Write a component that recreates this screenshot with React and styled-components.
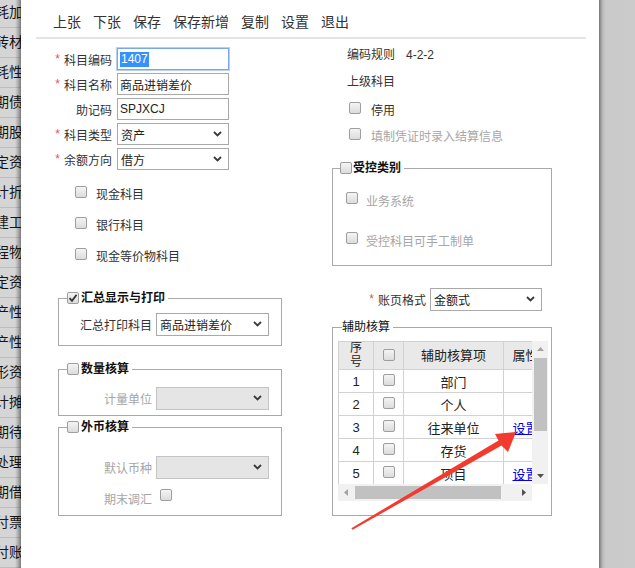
import React from "react";
import styled, { createGlobalStyle } from "styled-components";

const GlobalStyle = createGlobalStyle`
  html, body { margin: 0; padding: 0; }
  body {
    font-family: "Liberation Sans", "Noto Sans CJK SC", sans-serif;
    font-size: 12px;
    color: #333;
    background: #fff;
  }
  * { box-sizing: border-box; }
`;

const FONT = `"Liberation Sans", "Noto Sans CJK SC", sans-serif`;

const Page = styled.div`
  position: relative;
  display: flex;
  width: 635px;
  height: 568px;
  overflow: hidden;
  font-family: ${FONT};
`;

const Strip = styled.div`
  position: relative;
  flex: none;
  width: 21px;
  height: 568px;
  overflow: hidden;
  background: #d5d5d5;
  display: flex;
  flex-direction: column;
  &::after {
    content: "";
    position: absolute;
    top: 0;
    right: 0;
    bottom: 0;
    width: 6px;
    background: linear-gradient(to right, rgba(0,0,0,0), rgba(0,0,0,0.18) 50%, rgba(0,0,0,0.42));
  }
`;

const StripRow = styled.div`
  flex: none;
  height: 30px;
  line-height: 29px;
  border-bottom: 1px solid #bcbcbc;
  font-size: 14px;
  color: #151515;
  white-space: nowrap;
  text-indent: -5px;
  &:first-child { margin-top: -2px; }
`;

const Dialog = styled.div`
  flex: 1;
  background: #fff;
  display: flex;
  flex-direction: column;
`;

const Side = styled.div`
  flex: none;
  width: 36px;
  background: linear-gradient(to right, #777 0, #9c9c9c 2px, #bdbdbd 4px, #cacaca 7px, #cbcbcb);
`;

const Toolbar = styled.div`
  display: flex;
  gap: 12px;
  height: 39px;
  margin: 0 13px 0 15px;
  padding: 14px 0 0 17px;
  border-bottom: 2px solid #e4e4e4;
  font-size: 14px;
  line-height: 16px;
  color: #333;
`;

const ToolItem = styled.span`
  white-space: nowrap;
`;

const Body = styled.div`
  display: flex;
  padding: 9px 0 0 29px;
  gap: 51px;
`;

const LeftCol = styled.div`
  width: 231px;
  display: flex;
  flex-direction: column;
`;

const RightCol = styled.div`
  width: 221px;
  display: flex;
  flex-direction: column;
`;

const FormRow = styled.div`
  display: flex;
  align-items: center;
  height: 22px;
  margin-top: ${(p) => p.$mt || 0}px;
`;

const Label = styled.div`
  width: ${(p) => p.$w}px;
  flex: none;
  display: flex;
  justify-content: flex-end;
  align-items: center;
  margin-right: ${(p) => (p.$gap != null ? p.$gap : 5)}px;
  color: ${(p) => (p.$muted ? "#a6a6a6" : "#333")};
  font-size: 12px;
  white-space: nowrap;
`;

const Star = styled.span`
  color: #e8505b;
  margin-right: 4px;
  font-size: 12px;
`;

const Input = styled.div`
  width: 112px;
  height: 22px;
  flex: none;
  display: flex;
  align-items: center;
  padding-left: 2px;
  border: 1px solid ${(p) => (p.$focus ? "#7aa7e6" : "#a9a9a9")};
  box-shadow: ${(p) => (p.$focus ? "0 0 0 1px #b7d0f2" : "none")};
  font-size: 12px;
  color: #222;
  background: #fff;
`;

const Selected = styled.span`
  background: #3392fe;
  color: #fff;
  line-height: 15px;
  padding: 0 1px;
`;

const SelectBox = styled.div`
  width: ${(p) => p.$w}px;
  height: ${(p) => p.$h || 23}px;
  flex: none;
  display: flex;
  align-items: center;
  justify-content: space-between;
  padding: 0 6px 0 3px;
  border: 1px solid ${(p) => (p.$disabled ? "#c4c4c4" : "#a9a9a9")};
  background: ${(p) => (p.$disabled ? "#e5e5e5" : "#fff")};
  font-size: 12px;
  color: #222;
`;

const Chevron = () => (
  <svg width="9" height="6" viewBox="0 0 9 6">
    <polyline points="1,1 4.5,4.5 8,1" fill="none" stroke="#3a3a3a" strokeWidth="1.8" />
  </svg>
);

const Select = ({ w, h, disabled, children }) => (
  <SelectBox $w={w} $h={h} $disabled={disabled}>
    <span>{children}</span>
    <Chevron />
  </SelectBox>
);

const Box = styled.span`
  display: inline-flex;
  align-items: center;
  justify-content: center;
  flex: none;
  width: 12px;
  height: 12px;
  border: 1px solid #9e9e9e;
  border-radius: 2px;
  background: linear-gradient(#f4f4f4, #dcdcdc);
  margin-bottom: ${(p) => p.$lift || 0}px;
`;

const Check = ({ checked, lift }) => (
  <Box $lift={lift}>
    {checked && (
      <svg width="10" height="10" viewBox="0 0 10 10">
        <polyline points="1.5,5.2 4,7.8 8.6,1.8" fill="none" stroke="#333" strokeWidth="1.8" />
      </svg>
    )}
  </Box>
);

const CheckRow = styled.div`
  display: flex;
  align-items: center;
  height: 16px;
  margin-top: ${(p) => p.$mt || 0}px;
  margin-left: ${(p) => p.$ml || 0}px;
  gap: ${(p) => p.$gap || 9}px;
  color: ${(p) => (p.$muted ? "#a6a6a6" : "#333")};
  font-size: 12px;
  line-height: 16px;
  white-space: nowrap;
`;

const Group = styled.fieldset`
  margin: ${(p) => p.$mt || 0}px 0 0 ${(p) => p.$ml || 0}px;
  padding: 0;
  width: ${(p) => p.$w}px;
  min-width: 0;
  border: 1px solid #a9a9a9;
`;

const Legend = styled.legend`
  display: flex;
  align-items: center;
  gap: ${(p) => p.$gap || 1}px;
  height: 16px;
  margin-left: ${(p) => p.$ml}px;
  padding: 0 3px 0 0;
  font-size: 12px;
  line-height: 16px;
  font-weight: ${(p) => (p.$bold ? 700 : 400)};
  color: #111;
  white-space: nowrap;
`;

const GroupBody = styled.div`
  padding: ${(p) => p.$pad};
  display: flex;
  flex-direction: column;
`;

const InfoRow = styled.div`
  display: flex;
  height: 14px;
  line-height: 14px;
  margin-top: ${(p) => p.$mt || 0}px;
  padding-left: 15px;
  color: #333;
  font-size: 12px;
`;

const InfoValue = styled.span`
  margin-left: 11px;
`;

/* table */
const Grid = styled.div`
  display: grid;
  grid-template-columns: 194px 16px;
  grid-template-rows: 143px 17px;
  width: 210px;
`;

const Clip = styled.div`
  overflow: hidden;
  width: 194px;
  height: 143px;
`;

const Table = styled.table`
  border-collapse: collapse;
  table-layout: fixed;
  width: 209px;
  font-size: 13px;
  color: #222;
  th, td {
    border: 1px solid #d2d2d2;
    text-align: center;
    padding: 0;
    overflow: hidden;
    white-space: nowrap;
  }
  th {
    height: 28px;
    background: #e9e9e9;
    font-weight: 400;
    line-height: 13px;
  }
  td {
    height: 23px;
    background: #fff;
  }
`;

const StackHead = styled.div`
  display: flex;
  flex-direction: column;
  align-items: center;
  font-size: 12px;
  line-height: 13px;
  gap: 1px;
`;

const Num = styled.td`
  font-family: "Liberation Sans", sans-serif;
`;

const Link = styled.a`
  color: #0000ee;
  text-decoration: underline;
`;

const VScroll = styled.div`
  background: #f1f1f1;
  display: flex;
  flex-direction: column;
  align-items: center;
`;

const HScroll = styled.div`
  background: #f1f1f1;
  display: flex;
  align-items: center;
`;

const Btn = styled.div`
  flex: none;
  width: 16px;
  height: 16px;
  display: flex;
  align-items: center;
  justify-content: center;
`;

const VThumb = styled.div`
  width: 13px;
  height: 73px;
  margin-top: 1px;
  background: #c1c1c1;
`;

const HThumb = styled.div`
  width: 146px;
  height: 13px;
  margin-left: 1px;
  background: #c1c1c1;
`;

const Spacer = styled.div`
  flex: 1;
`;

const Corner = styled.div`
  background: #fff;
`;

const Tri = ({ dir, color }) => {
  const pts = {
    up: "0,4 3.5,0 7,4",
    down: "0,0 3.5,4 7,0",
    left: "4,0 0,3.5 4,7",
    right: "0,0 4,3.5 0,7",
  }[dir];
  const vert = dir === "up" || dir === "down";
  return (
    <svg width={vert ? 7 : 4} height={vert ? 4 : 7} viewBox={vert ? "0 0 7 4" : "0 0 4 7"}>
      <polygon points={pts} fill={color} />
    </svg>
  );
};

const ArrowLayer = styled.svg`
  position: absolute;
  left: 0;
  top: 0;
  pointer-events: none;
`;

const stripLabels = [
  "耗加", "砖材", "耗性", "期债", "期股", "定资", "计折", "建工", "程物", "定资",
  "产性", "产性", "形资", "计摊", "期待", "处理", "期借", "付票", "付账", "付职",
];

const tools = ["上张", "下张", "保存", "保存新增", "复制", "设置", "退出"];

const rows = [
  { n: 1, name: "部门" },
  { n: 2, name: "个人" },
  { n: 3, name: "往来单位", link: true },
  { n: 4, name: "存货" },
  { n: 5, name: "项目", link: true },
];

export default function App() {
  return (
    <>
      <GlobalStyle />
      <Page>
        <Strip>
          {stripLabels.map((t, i) => (
            <StripRow key={i}>{t}</StripRow>
          ))}
        </Strip>
        <Dialog>
          <Toolbar>
            {tools.map((t) => (
              <ToolItem key={t}>{t}</ToolItem>
            ))}
          </Toolbar>
          <Body>
            <LeftCol>
              <FormRow>
                <Label $w={62}><Star>*</Star>科目编码</Label>
                <Input $focus><Selected>1407</Selected></Input>
              </FormRow>
              <FormRow $mt={3}>
                <Label $w={62}><Star>*</Star>科目名称</Label>
                <Input>商品进销差价</Input>
              </FormRow>
              <FormRow $mt={3}>
                <Label $w={62}>助记码</Label>
                <Input>SPJXCJ</Input>
              </FormRow>
              <FormRow $mt={3}>
                <Label $w={62}><Star>*</Star>科目类型</Label>
                <Select w={112} h={22}>资产</Select>
              </FormRow>
              <FormRow $mt={3}>
                <Label $w={62}><Star>*</Star>余额方向</Label>
                <Select w={112} h={22}>借方</Select>
              </FormRow>

              <CheckRow $mt={17} $ml={25}><Check lift={6} />现金科目</CheckRow>
              <CheckRow $mt={15} $ml={25}><Check lift={6} />银行科目</CheckRow>
              <CheckRow $mt={15} $ml={25}><Check lift={6} />现金等价物科目</CheckRow>

              <Group $mt={25} $ml={8} $w={224}>
                <Legend $ml={8} $gap={2} $bold><Check checked />汇总显示与打印</Legend>
                <GroupBody $pad="7px 0 10px 21px">
                  <FormRow>
                    <Label $w={72} $gap={4}>汇总打印科目</Label>
                    <Select w={113}>商品进销差价</Select>
                  </FormRow>
                </GroupBody>
              </Group>

              <Group $mt={15} $ml={8} $w={224}>
                <Legend $ml={8} $gap={2} $bold><Check />数量核算</Legend>
                <GroupBody $pad="10px 0 6px 21px">
                  <FormRow>
                    <Label $w={72} $gap={4} $muted>计量单位</Label>
                    <Select w={113} disabled />
                  </FormRow>
                </GroupBody>
              </Group>

              <Group $mt={3} $ml={8} $w={224}>
                <Legend $ml={8} $gap={2} $bold><Check />外币核算</Legend>
                <GroupBody $pad="21px 0 6px 21px">
                  <FormRow>
                    <Label $w={72} $gap={4} $muted>默认币种</Label>
                    <Select w={113} disabled />
                  </FormRow>
                  <FormRow $mt={9}>
                    <Label $w={72} $gap={8} $muted>期末调汇</Label>
                    <Check lift={6} />
                  </FormRow>
                </GroupBody>
              </Group>
            </LeftCol>

            <RightCol>
              <InfoRow>编码规则<InfoValue>4-2-2</InfoValue></InfoRow>
              <InfoRow $mt={13}>上级科目</InfoRow>
              <CheckRow $mt={14} $ml={17} $gap={10}><Check lift={6} />停用</CheckRow>
              <CheckRow $mt={10} $ml={17} $gap={10} $muted><Check lift={6} />填制凭证时录入结算信息</CheckRow>

              <Group $mt={15} $w={220}>
                <Legend $ml={7} $bold><Check />受控类别</Legend>
                <GroupBody $pad="18px 0 15px 13px">
                  <CheckRow $gap={8} $muted><Check lift={8} />业务系统</CheckRow>
                  <CheckRow $mt={24} $gap={8} $muted><Check lift={8} />受控科目可手工制单</CheckRow>
                </GroupBody>
              </Group>

              <FormRow $mt={22}>
                <Label $w={94} $gap={4}><Star>*</Star>账页格式</Label>
                <Select w={112}>金额式</Select>
              </FormRow>

              <Group $mt={9} $w={220}>
                <Legend $ml={9}>辅助核算</Legend>
                <GroupBody $pad="6px 0 14px 5px">
                  <Grid>
                    <Clip>
                      <Table>
                        <colgroup>
                          <col style={{ width: 35 }} />
                          <col style={{ width: 30 }} />
                          <col style={{ width: 100 }} />
                          <col style={{ width: 44 }} />
                        </colgroup>
                        <thead>
                          <tr>
                            <th><StackHead><span>序</span><span>号</span></StackHead></th>
                            <th><Check /></th>
                            <th>辅助核算项</th>
                            <th>属性</th>
                          </tr>
                        </thead>
                        <tbody>
                          {rows.map((r) => (
                            <tr key={r.n}>
                              <Num>{r.n}</Num>
                              <td><Check /></td>
                              <td>{r.name}</td>
                              <td>{r.link ? <Link>设置</Link> : null}</td>
                            </tr>
                          ))}
                        </tbody>
                      </Table>
                    </Clip>
                    <VScroll>
                      <Btn><Tri dir="up" color="#a3a3a3" /></Btn>
                      <VThumb />
                      <Spacer />
                      <Btn><Tri dir="down" color="#505050" /></Btn>
                    </VScroll>
                    <HScroll>
                      <Btn><Tri dir="left" color="#a3a3a3" /></Btn>
                      <HThumb />
                      <Spacer />
                      <Btn><Tri dir="right" color="#505050" /></Btn>
                    </HScroll>
                    <Corner />
                  </Grid>
                </GroupBody>
              </Group>
            </RightCol>
          </Body>
        </Dialog>
        <Side />
        <ArrowLayer width="635" height="568" viewBox="0 0 635 568">
          <polygon
            points="516,432 495,434 498.5,440.5 351.4,528.2 352.6,529.8 501.5,445.5 508,452"
            fill="#f23a2e"
          />
        </ArrowLayer>
      </Page>
    </>
  );
}
